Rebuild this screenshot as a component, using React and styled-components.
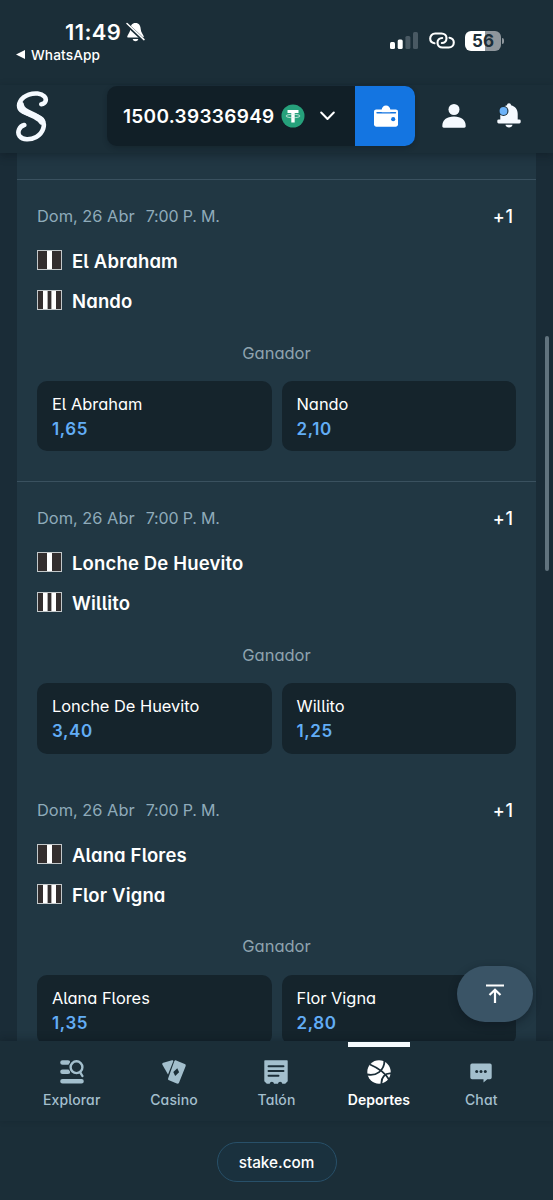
import React from 'react';
import styled, { createGlobalStyle, css } from 'styled-components';

const GlobalStyle = createGlobalStyle`
  * {
    box-sizing: border-box;
  }

  body {
    margin: 0;
    background: #1b2e38;
    font-family: Inter, "Liberation Sans", sans-serif;
    color: #fff;
  }

  button {
    font-family: inherit;
    color: inherit;
    border: none;
    margin: 0;
    cursor: pointer;
  }

  svg {
    display: block;
    flex: none;
  }
`;

/* round letterforms: single storey a, l with a tail */
const soft = css`
  font-feature-settings: "cv11", "cv05";
`;

const Screen = styled.div`
  width: 553px;
  height: 1200px;
  display: flex;
  flex-direction: column;
  position: relative;
  overflow: hidden;
  background: #1b2e38;
`;

/******************* STATUS BAR */
const StatusBar = styled.div`
  height: 85px;
  flex: none;
  display: flex;
  justify-content: space-between;
  padding: 20px 49px 0 16px;
`;

const StatusLeft = styled.div`
  display: flex;
  flex-direction: column;
`;

const Clock = styled.div`
  display: flex;
  align-items: center;
  gap: 5px;
  height: 23px;
  padding-left: 49px;
  font-size: 22px;
  font-weight: 600;
  letter-spacing: 0.4px;
`;

const BackApp = styled.div`
  display: flex;
  align-items: center;
  gap: 6px;
  height: 23px;
  font-size: 13.7px;
  font-weight: 500;
  letter-spacing: 0.1px;
`;

const StatusRight = styled.div`
  display: flex;
  align-items: center;
  height: 41px;
  gap: 10.5px;
`;

const Battery = styled.div`
  display: flex;
  align-items: center;
  gap: 1px;
`;

const BatteryBody = styled.div`
  width: 36px;
  height: 20px;
  border-radius: 6px;
  background: linear-gradient(90deg, #fff 56%, #8e969c 56%);
  color: #1b2e38;
  font-size: 17px;
  line-height: 20px;
  font-weight: 700;
  text-align: center;
`;

const BatteryTip = styled.div`
  width: 2px;
  height: 6px;
  border-radius: 0 2px 2px 0;
  background: #8e969c;
`;

/******************* HEADER */
const Header = styled.header`
  height: 68px;
  flex: none;
  display: flex;
  align-items: center;
  padding: 0 32px 6px 16px;
  position: relative;
  box-shadow: 0 3px 8px rgba(10, 20, 28, 0.4);
  z-index: 1;
`;

const Wallet = styled.div`
  display: flex;
  width: 308px;
  height: 60px;
  margin-left: 58px;
  border-radius: 10px;
  overflow: hidden;
  background: #111f27;
  box-shadow: 0 2px 5px rgba(10, 20, 28, 0.3);
`;

const Balance = styled.div`
  flex: 1;
  display: flex;
  align-items: center;
  padding-left: 16px;
`;

const Amount = styled.span`
  width: 158px;
  font-size: 19px;
  font-weight: 600;
  white-space: nowrap;
  letter-spacing: 0.3px;
`;

const Chevron = styled.span`
  margin-left: 15px;
`;

const WalletBtn = styled.button`
  width: 60px;
  display: flex;
  align-items: center;
  justify-content: center;
  padding: 0 0 0 1px;
  background: #1475e1;
`;

const HeaderIcons = styled.div`
  flex: 1;
  display: flex;
  align-items: flex-end;
  justify-content: space-between;
  padding: 0 0 1px 27px;
`;

/******************* EVENTS */
const Main = styled.main`
  height: 888px;
  flex: none;
  overflow: hidden;
  padding: 0 17px;
  background: #1a2c37;
`;

const Board = styled.div`
  height: 920px;
  padding-top: 26px;
  background: #213743;
`;

const Event = styled.section`
  padding: ${({ $line }) => ($line ? '24px' : '14.4px')} 20px 30px;
  border-top: ${({ $line }) => ($line ? '1px solid #3a515f' : 'none')};
`;

const EventTop = styled.div`
  display: flex;
  justify-content: space-between;
  height: 24px;
  line-height: 24px;
  margin-bottom: 18px;
`;

const When = styled.div`
  display: flex;
  gap: 11px;
  font-size: 16.4px;
  color: #8fabba;
`;

const Time = styled.span`
  font-size: 16px;
  letter-spacing: -0.15px;
`;

const More = styled.div`
  font-size: 18px;
  line-height: 25px;
  font-weight: 500;
  letter-spacing: 0.9px;
  padding-right: 2px;
`;

const Team = styled.div`
  display: flex;
  align-items: center;
  gap: 10px;
  height: 30px;
  margin-bottom: 10px;
  font-size: 18.5px;
  font-weight: 600;
  letter-spacing: 0.15px;
  ${soft}

  svg {
    margin-bottom: 2px;
  }
`;

const Market = styled.div`
  margin-top: 24.5px;
  height: 24px;
  line-height: 24px;
  font-size: 16.5px;
  text-align: center;
  color: #8fa3af;
  ${soft}
`;

const Outcomes = styled.div`
  display: grid;
  grid-template-columns: 1fr 1fr;
  gap: 10px;
  margin-top: 16.5px;
`;

const Outcome = styled.button`
  height: 70.3px;
  padding: 1.6px 15px 0;
  border-radius: 10px;
  background: #15242c;
  text-align: left;
  display: flex;
  flex-direction: column;
  justify-content: center;
`;

const OutcomeName = styled.span`
  font-size: 16.4px;
  line-height: 25px;
  ${soft}
`;

const Odds = styled.span`
  font-size: 17px;
  line-height: 25px;
  font-weight: 600;
  letter-spacing: 0.6px;
  color: #62adf5;
`;

const ScrollThumb = styled.div`
  position: absolute;
  top: 336px;
  right: 4px;
  width: 4px;
  height: 235px;
  border-radius: 2px;
  background: #61737e;
`;

const ToTop = styled.button`
  position: absolute;
  top: 966px;
  left: 457px;
  width: 76px;
  height: 56px;
  padding: 0;
  border-radius: 28px;
  background: #3a5466;
  box-shadow: 0 3px 9px rgba(10, 20, 28, 0.45);
  display: flex;
  align-items: center;
  justify-content: center;
  z-index: 2;
`;

/******************* BOTTOM NAV */
const Nav = styled.nav`
  display: flex;
  justify-content: center;
  height: 80px;
  flex: none;
  position: relative;
  box-shadow: 0 -2px 7px rgba(10, 20, 28, 0.3);
`;

const NavItem = styled.a`
  width: 102.4px;
  display: flex;
  flex-direction: column;
  align-items: center;
  font-size: 14px;
  font-weight: ${({ $active }) => ($active ? 600 : 500)};
  color: ${({ $active }) => ($active ? '#fff' : '#a3bfcd')};
  ${soft}

  &::before {
    content: "";
    width: 62px;
    height: 5px;
    margin: 1px 0 13px;
    background: ${({ $active }) => ($active ? '#f5fafd' : 'transparent')};
  }
`;

const NavLabel = styled.span`
  margin-top: 6px;
  line-height: 20px;
  letter-spacing: ${({ $active }) => ($active ? '0' : '0.15px')};
`;

const AddressRow = styled.div`
  display: flex;
  justify-content: center;
  padding-top: 21px;
`;

const Address = styled.div`
  width: 120px;
  height: 40px;
  border: 1px solid #285069;
  border-radius: 20px;
  background: #1a313e;
  font-size: 15.3px;
  line-height: 39px;
  font-weight: 500;
  text-align: center;
`;

const events = [
  { home: 'El Abraham', away: 'Nando', odds: ['1,65', '2,10'], line: true },
  { home: 'Lonche De Huevito', away: 'Willito', odds: ['3,40', '1,25'], line: true },
  { home: 'Alana Flores', away: 'Flor Vigna', odds: ['1,35', '2,80'], line: false },
];

const MutedBell = () => (
  <svg width="19" height="20" viewBox="0 0 19 20">
    <path d="M9.5 1C6 1 4.4 3.7 4.3 7C4.2 10.5 2 12 1.3 14.2c-.2.8.2 1.3 1 1.3h14.4c.8 0 1.2-.5 1-1.3C17 12 14.8 10.5 14.7 7C14.6 3.7 13 1 9.5 1z" fill="#fff" />
    <path d="M6.7 17h5.6c-.4 1.5-1.4 2.2-2.8 2.2S7.1 18.5 6.7 17z" fill="#fff" />
    <path d="M.8 2.4L18 18.4" stroke="#1b2e38" strokeWidth="3.4" />
    <path d="M1 1.5L18 17.6" stroke="#fff" strokeWidth="1.5" strokeLinecap="round" />
  </svg>
);

const Signal = () => (
  <svg width="28" height="18" viewBox="0 0 28 18">
    <rect x="0" y="10" width="5" height="7" rx="1.5" fill="#fff" />
    <rect x="7.7" y="7.5" width="5" height="9.5" rx="1.5" fill="#fff" />
    <rect x="15.4" y="4" width="5" height="13" rx="1.5" fill="#495963" />
    <rect x="23" y="0" width="5" height="17" rx="1.5" fill="#495963" />
  </svg>
);

const LinkIcon = () => (
  <svg width="26" height="17" viewBox="0 0 26 17" fill="none" stroke="#fff" strokeWidth="2.1" strokeLinecap="round">
    <path d="M5.5 11.3C2.8 10.8 1.2 9 1.2 6.5C1.2 3.6 3.3 1.5 6.2 1.5H12.5C15.5 1.5 17.5 3.5 17.5 6.3C17.5 9.2 15.5 11 12.8 11" />
    <path d="M20.5 5.7C23.2 6.2 24.8 8 24.8 10.5C24.8 13.4 22.7 15.5 19.8 15.5H13.5C10.5 15.5 8.5 13.5 8.5 10.7C8.5 7.8 10.5 6 13.2 6" />
  </svg>
);

const Logo = () => (
  <svg width="33" height="52" viewBox="0 0 33 52" fill="none" stroke="#f5faff" strokeLinecap="round" strokeLinejoin="round">
    <path d="M25.3 14.2C29.6 13.6 31.2 9.4 28.3 6.4C25.3 3.3 18.8 2.5 12.8 4.7C4.8 7.7 1.3 14 4 19.2C7.3 25 21.5 23.7 26 29.5C30 34.6 27 43.2 20.3 46.9C14.3 50.2 6.6 50.2 3.6 46.2C.8 42.2 3.2 36.3 8.3 35" strokeWidth="4.6" />
    <path d="M4.8 15C5.5 24 21 23.5 25.8 31.5" strokeWidth="6.4" />
  </svg>
);

const Tether = () => (
  <svg width="24" height="24" viewBox="0 0 24 24">
    <circle cx="12" cy="12" r="11.5" fill="#26a17b" />
    <path d="M6.5 6h11v3h-3.8v9.5h-3.4V9H6.5z" fill="#fff" />
    <ellipse cx="12" cy="12" rx="7" ry="1.7" fill="none" stroke="#d9f0e8" strokeWidth=".8" />
  </svg>
);

const WalletIcon = () => (
  <svg width="24" height="22" viewBox="0 0 24 22">
    <path d="M2.2 4.5H21.8C23 4.5 24 5.4 24 6.7V19.3C24 20.7 23 21.7 21.6 21.7H2.4C1 21.7 0 20.7 0 19.3V6.7C0 5.4 1 4.5 2.2 4.5z" fill="#fff" />
    <path d="M3 7.8H21.5" stroke="#1475e1" strokeWidth="1.4" strokeLinecap="round" />
    <path d="M7.7 7.2V4.7a4.3 4.3 0 0 1 8.6 0V7.2z" fill="#fff" />
    <circle cx="19.2" cy="14.2" r="2.1" fill="#1475e1" />
  </svg>
);

const UserIcon = () => (
  <svg width="24" height="24" viewBox="0 0 24 24" fill="#f5faff">
    <circle cx="12" cy="5.5" r="5.5" />
    <path d="M.3 22C.3 16.2 4.5 12.6 12 12.6S23.7 16.2 23.7 22C23.7 23 23.2 23.7 22.2 23.7H1.8C.8 23.7.3 23 .3 22z" />
  </svg>
);

const BellIcon = () => (
  <svg width="24" height="25" viewBox="0 0 24 25">
    <path d="M12 .3c1.2 0 2 .8 2 2c4.3 1 6.7 4.3 6.7 8.5V16.5H22.3a1.4 1.4 0 0 1 1.4 1.5v1a1.4 1.4 0 0 1-1.4 1.4H1.7A1.4 1.4 0 0 1 .3 19V18a1.4 1.4 0 0 1 1.4-1.5H3.3V10.8C3.3 6.6 5.7 3.3 10 2.3c0-1.2.8-2 2-2z" fill="#f5faff" />
    <path d="M8.5 21.8h7c-.3 1.7-1.7 2.8-3.5 2.8S8.8 23.5 8.5 21.8z" fill="#f5faff" />
    <circle cx="6.5" cy="8" r="5" fill="#1b2e38" />
    <circle cx="6.5" cy="8" r="3.9" fill="#6db3f8" />
  </svg>
);

const Flag = ({ stripes }) => (
  <svg width="25" height="20" viewBox="0 0 25 20">
    <rect x=".5" y=".5" width="24" height="19" fill="#332e2e" stroke="#c3c8ca" />
    {stripes === 1 && <rect x="10" y="1" width="5" height="18" fill="#fff" />}
    {stripes === 2 && (
      <>
        <rect x="6" y="1" width="4.6" height="18" fill="#fff" />
        <rect x="14.4" y="1" width="4.6" height="18" fill="#fff" />
      </>
    )}
  </svg>
);

const ExploreIcon = () => (
  <svg width="24" height="24" viewBox="0 0 24 24">
    <path d="M2.5 2.5H8M2.5 11.8H8M2.5 21.2H21.5" stroke="#a3bfcd" strokeWidth="4.6" strokeLinecap="round" />
    <circle cx="16.5" cy="7" r="8" fill="#1b2e38" />
    <circle cx="16.5" cy="7.2" r="5.9" fill="none" stroke="#a3bfcd" strokeWidth="2.4" />
    <path d="M20 12L22.4 16" stroke="#a3bfcd" strokeWidth="2.4" strokeLinecap="round" />
  </svg>
);

const CasinoIcon = () => (
  <svg width="24" height="24" viewBox="0 0 24 24">
    <path d="M1.3 2.7L10 .3C10.8.1 11.4.6 11.2 1.5L6 14.5L.4 4.7C0 3.7.3 3 1.3 2.7z" fill="#a3bfcd" />
    <path d="M14.2.4L22.7 4C23.6 4.4 24 5.2 23.6 6.2L17 22.7C16.6 23.6 15.8 24 14.8 23.6L7 20.3C6.2 20 5.8 19.2 6.2 18.2L12.3 1.2C12.7.3 13.4.1 14.2.4z" fill="#a3bfcd" />
    <path d="M15.3 8.3L17.1 12.2L13.2 16L11.3 12z" fill="#1b2e38" />
  </svg>
);

const SlipIcon = () => (
  <svg width="24" height="24" viewBox="0 0 24 24">
    <path d="M1 .3H23a.7.7 0 0 1 .7.7V21.3L21.2 23.7H18.3C18 21 14.3 21 14 23.7H10C9.7 21 6 21 5.7 23.7H2.8L.3 21.3V1A.7.7 0 0 1 1 .3z" fill="#a3bfcd" />
    <path d="M4.5 6.2H19.5M4.5 11H19.5M4.5 15.8H14.5" stroke="#1b2e38" strokeWidth="1.9" strokeLinecap="round" />
  </svg>
);

const BallIcon = () => (
  <svg width="24" height="24" viewBox="0 0 24 24">
    <circle cx="12" cy="12" r="11.7" fill="#fff" />
    <g fill="none" stroke="#1b2e38" strokeWidth="1.8">
      <path d="M3 4.5C10 7.5 18 12.5 22 19.5" />
      <path d="M0 14.5C9 16.5 17.5 11 17.5 0" />
      <path d="M24 13.5C18 13 14 17.5 14.5 24" />
    </g>
  </svg>
);

const ChatIcon = () => (
  <svg width="24" height="24" viewBox="0 0 24 24">
    <path d="M3 3.5H21A1.8 1.8 0 0 1 22.7 5.3V17.5A1.8 1.8 0 0 1 21 19.2H18.3L14.5 22.5V19.2H3A1.8 1.8 0 0 1 1.3 17.5V5.3A1.8 1.8 0 0 1 3 3.5z" fill="#a3bfcd" />
    <circle cx="7.7" cy="11.5" r="1.5" fill="#1b2e38" />
    <circle cx="12" cy="11.5" r="1.5" fill="#1b2e38" />
    <circle cx="16.3" cy="11.5" r="1.5" fill="#1b2e38" />
  </svg>
);

const navItems = [
  { label: 'Explorar', Icon: ExploreIcon },
  { label: 'Casino', Icon: CasinoIcon },
  { label: 'Talón', Icon: SlipIcon },
  { label: 'Deportes', Icon: BallIcon, active: true },
  { label: 'Chat', Icon: ChatIcon },
];

const EventCard = ({ home, away, odds, line }) => (
  <Event $line={line}>
    <EventTop>
      <When><span>Dom, 26 Abr</span><Time>7:00 P. M.</Time></When>
      <More>+1</More>
    </EventTop>
    <Team><Flag stripes={1} /><span>{home}</span></Team>
    <Team><Flag stripes={2} /><span>{away}</span></Team>
    <Market>Ganador</Market>
    <Outcomes>
      <Outcome><OutcomeName>{home}</OutcomeName><Odds>{odds[0]}</Odds></Outcome>
      <Outcome><OutcomeName>{away}</OutcomeName><Odds>{odds[1]}</Odds></Outcome>
    </Outcomes>
  </Event>
);

const App = () => {
  return (
    <Screen>
      <GlobalStyle />
      <StatusBar>
        <StatusLeft>
          <Clock><span>11:49</span><MutedBell /></Clock>
          <BackApp>
            <svg width="9" height="9" viewBox="0 0 9 9"><path d="M0 4.5L9 0V9z" fill="#fff" /></svg>
            <span>WhatsApp</span>
          </BackApp>
        </StatusLeft>
        <StatusRight>
          <Signal />
          <LinkIcon />
          <Battery>
            <BatteryBody>56</BatteryBody>
            <BatteryTip />
          </Battery>
        </StatusRight>
      </StatusBar>

      <Header>
        <Logo />
        <Wallet>
          <Balance>
            <Amount>1500.39336949</Amount>
            <Tether />
            <Chevron>
              <svg width="15" height="10" viewBox="0 0 15 10"><path d="M1.2 1.5L7.5 8L13.8 1.5" fill="none" stroke="#fff" strokeWidth="2" strokeLinecap="round" strokeLinejoin="round" /></svg>
            </Chevron>
          </Balance>
          <WalletBtn><WalletIcon /></WalletBtn>
        </Wallet>
        <HeaderIcons><UserIcon /><BellIcon /></HeaderIcons>
      </Header>

      <Main>
        <Board>
          {events.map((event) => <EventCard key={event.home} {...event} />)}
        </Board>
      </Main>

      <Nav>
        {navItems.map(({ label, Icon, active }) => (
          <NavItem key={label} $active={active}>
            <Icon />
            <NavLabel $active={active}>{label}</NavLabel>
          </NavItem>
        ))}
      </Nav>
      <AddressRow><Address>stake.com</Address></AddressRow>

      <ScrollThumb />
      <ToTop>
        <svg width="20" height="20" viewBox="0 0 20 20" fill="none" stroke="#fff" strokeWidth="2.2"><path d="M1 1.5H19M10 19V6.5M4.5 11L10 5.8L15.5 11" /></svg>
      </ToTop>
    </Screen>
  );
};

export default App;
